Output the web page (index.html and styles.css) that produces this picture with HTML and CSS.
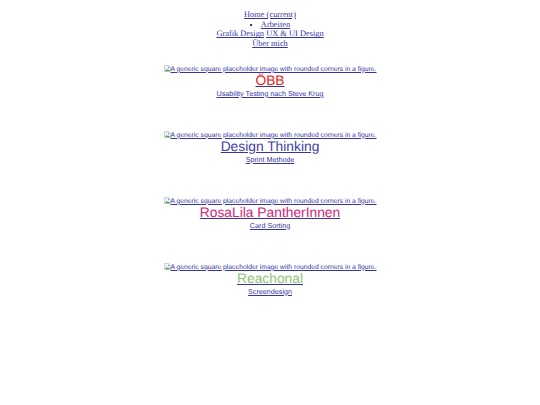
FILE: index.html
```html
<!DOCTYPE html>
<html lang="de">
<head>
<meta charset="utf-8">
<title>Arbeiten</title>
<link rel="stylesheet" href="styles.css">
</head>
<body>
<nav class="nav">
  <a href="#" class="nav-line">Home (current)</a>
  <ul class="nav-list">
    <li><a href="#">Arbeiten</a></li>
  </ul>
  <div class="nav-line"><a href="#">Grafik Design</a> <a href="#">UX &amp; UI Design</a></div>
  <a href="#" class="nav-line">Über mich</a>
</nav>
<main class="works">
  <figure class="card">
    <a href="#" class="alt"><svg class="broken" viewBox="0 0 8 8" width="7" height="7"><path d="M0.5 0.5h5l2 2v5h-7z" fill="#eef3f8" stroke="#9aa7b4" stroke-width="0.6"/><path d="M1 7l2-2.5 1.5 1.5 1-1 1.5 2z" fill="#5aa04a"/><circle cx="5.2" cy="2.8" r="0.8" fill="#4a8fd0"/></svg>A generic square placeholder image with rounded corners in a figure.</a>
    <a href="#" class="title"><span class="t-oebb">ÖBB</span></a>
    <a href="#" class="sub">Usability Testing nach Steve Krug</a>
  </figure>
  <figure class="card">
    <a href="#" class="alt"><svg class="broken" viewBox="0 0 8 8" width="7" height="7"><path d="M0.5 0.5h5l2 2v5h-7z" fill="#eef3f8" stroke="#9aa7b4" stroke-width="0.6"/><path d="M1 7l2-2.5 1.5 1.5 1-1 1.5 2z" fill="#5aa04a"/><circle cx="5.2" cy="2.8" r="0.8" fill="#4a8fd0"/></svg>A generic square placeholder image with rounded corners in a figure.</a>
    <a href="#" class="title"><span class="t-dt">Design Thinking</span></a>
    <a href="#" class="sub">Sprint Methode</a>
  </figure>
  <figure class="card">
    <a href="#" class="alt"><svg class="broken" viewBox="0 0 8 8" width="7" height="7"><path d="M0.5 0.5h5l2 2v5h-7z" fill="#eef3f8" stroke="#9aa7b4" stroke-width="0.6"/><path d="M1 7l2-2.5 1.5 1.5 1-1 1.5 2z" fill="#5aa04a"/><circle cx="5.2" cy="2.8" r="0.8" fill="#4a8fd0"/></svg>A generic square placeholder image with rounded corners in a figure.</a>
    <a href="#" class="title"><span class="t-rosa">RosaLila PantherInnen</span></a>
    <a href="#" class="sub">Card Sorting</a>
  </figure>
  <figure class="card">
    <a href="#" class="alt"><svg class="broken" viewBox="0 0 8 8" width="7" height="7"><path d="M0.5 0.5h5l2 2v5h-7z" fill="#eef3f8" stroke="#9aa7b4" stroke-width="0.6"/><path d="M1 7l2-2.5 1.5 1.5 1-1 1.5 2z" fill="#5aa04a"/><circle cx="5.2" cy="2.8" r="0.8" fill="#4a8fd0"/></svg>A generic square placeholder image with rounded corners in a figure.</a>
    <a href="#" class="title"><span class="t-reach">Reachonal</span></a>
    <a href="#" class="sub">Screendesign</a>
  </figure>
</main>
</body>
</html>
```
FILE: styles.css
```css
html, body {
  margin: 0;
  padding: 0;
  background: #ffffff;
}

body {
  padding-top: 10px;
  text-rendering: geometricPrecision;
}

a {
  color: #3535a8;
  text-decoration: underline;
}

.nav {
  display: flex;
  flex-direction: column;
  align-items: center;
  font-family: "Liberation Serif", "Times New Roman", serif;
  font-size: 8.4px;
  line-height: 9.7px;
}

.nav-line {
  display: block;
}

.nav-list {
  margin: 0;
  padding: 0 0 0 11px;
  list-style: disc outside;
}

.works {
  display: flex;
  flex-direction: column;
  align-items: center;
  gap: 33px;
  margin-top: 16px;
  font-family: "Liberation Sans", Arial, sans-serif;
}

.card {
  margin: 0;
  display: flex;
  flex-direction: column;
  align-items: center;
}

.alt {
  display: block;
  font-size: 6.75px;
  line-height: 8px;
  height: 8px;
  white-space: nowrap;
}

.broken {
  display: inline-block;
  vertical-align: -1px;
}

.title {
  font-size: 13.8px;
  line-height: 16px;
}

.sub {
  font-size: 7.2px;
  line-height: 9px;
}

.t-oebb { color: #e2231a; }
.t-dt { color: #3f3fa8; }
.t-rosa { color: #d3237c; }
.t-reach { color: #8cc47a; }
```
